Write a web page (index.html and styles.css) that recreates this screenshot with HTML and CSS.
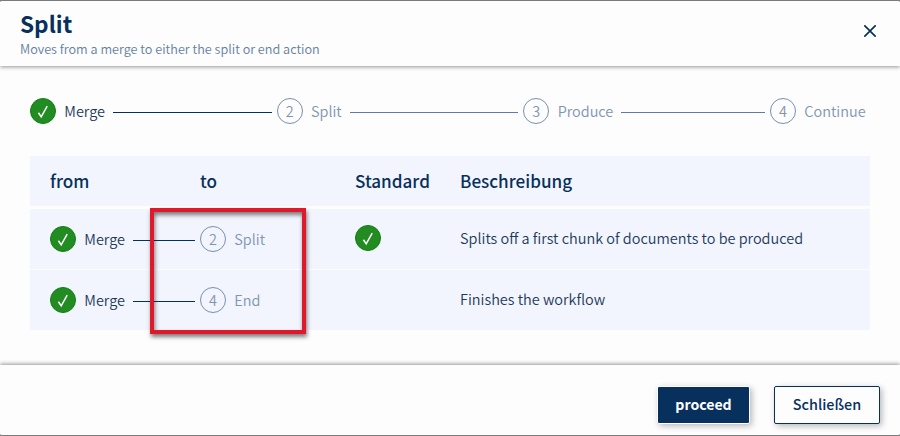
FILE: index.html
```html
<!DOCTYPE html>
<html lang="de">
<head>
<meta charset="utf-8">
<title>Split</title>
<link rel="stylesheet" href="styles.css">
</head>
<body>
<main class="dialog">
  <header class="head">
    <div>
      <h1 class="title">Split</h1>
      <p class="subtitle">Moves from a merge to either the split or end action</p>
    </div>
    <svg class="close" viewBox="0 0 12 12"><path d="M.3.3l11.4 11.4M11.7.3L.3 11.7"/></svg>
  </header>
  <section class="body">
    <div class="stepper">
      <div class="step done"><span class="dot"><svg viewBox="0 0 26 26"><path d="M8.4 14.8l2.8 4 6-10.6"/></svg></span><span class="label">Merge</span><i class="line"></i></div>
      <div class="step"><span class="dot">2</span><span class="label">Split</span><i class="line"></i></div>
      <div class="step"><span class="dot">3</span><span class="label">Produce</span><i class="line"></i></div>
      <div class="step last"><span class="dot">4</span><span class="label">Continue</span></div>
    </div>
    <div class="table">
      <div class="row heading"><span>from</span><span>to</span><span>Standard</span><span>Beschreibung</span></div>
      <div class="row">
        <div class="step done"><span class="dot"><svg viewBox="0 0 26 26"><path d="M8.4 14.8l2.8 4 6-10.6"/></svg></span><span class="label">Merge</span><i class="line"></i></div>
        <div class="step"><span class="dot">2</span><span class="label">Split</span></div>
        <div class="step done standard"><span class="dot"><svg viewBox="0 0 26 26"><path d="M8.4 14.8l2.8 4 6-10.6"/></svg></span></div>
        <span class="desc">Splits off a first chunk of documents to be produced</span>
      </div>
      <div class="row">
        <div class="step done"><span class="dot"><svg viewBox="0 0 26 26"><path d="M8.4 14.8l2.8 4 6-10.6"/></svg></span><span class="label">Merge</span><i class="line"></i></div>
        <div class="step"><span class="dot">4</span><span class="label">End</span></div>
        <span></span>
        <span class="desc">Finishes the workflow</span>
      </div>
      <div class="marker"></div>
    </div>
  </section>
  <footer class="foot">
    <button class="btn primary">proceed</button>
    <button class="btn">Schließen</button>
  </footer>
</main>
</body>
</html>
```
FILE: styles.css
```css
* { box-sizing: border-box; }
body {
  margin: 0;
  background: #777;
  color: #1d3a5c;
  font: 350 14.48px/20px "Noto Sans CJK SC", "Noto Sans", sans-serif;
}
.dialog {
  display: flex;
  flex-direction: column;
  height: 436px;
  border: solid #7b7b7b;
  border-width: 1px 0;
  border-radius: 2px;
  background: #fdfdfd;
  overflow: hidden;
}
.head {
  display: flex;
  justify-content: space-between;
  height: 65px;
  padding: 9px 24px 0 20px;
  box-shadow: 0 1px 4px rgba(0, 0, 0, .42);
}
.title {
  margin: 0;
  color: #08305d;
  font-size: 22.6px;
  font-weight: 700;
  line-height: 28px;
}
.subtitle {
  margin: 1px 0 0;
  color: #647f9f;
  font-size: 12.67px;
  line-height: 20px;
}
.close {
  width: 12px;
  height: 12px;
  margin-top: 15px;
  fill: none;
  stroke: #08305d;
  stroke-width: 1.7;
}
.body {
  flex: 1;
  padding: 32px 30px 0;
}
.stepper { display: flex; }
.step {
  display: flex;
  flex: 1;
  align-items: center;
  height: 26px;
  color: #7f95b0;
}
.step.last { flex: 0 0 100px; }
.dot {
  display: flex;
  flex: none;
  align-items: center;
  justify-content: center;
  width: 26px;
  height: 26px;
  border: 1px solid #7890ae;
  border-radius: 50%;
}
.done .dot {
  border-color: #108010;
  background: #228b22;
}
.dot svg {
  flex: none;
  width: 26px;
  height: 26px;
  fill: none;
  stroke: #fff;
  stroke-width: 1.5;
}
.label {
  margin-left: 8.3px;
  white-space: nowrap;
}
.done .label { color: #1d3a5c; }
.line {
  flex: 1;
  height: 1px;
  margin: 2px 5px 0 8px;
  background: #5d7da4;
}
.done .line { background: #08305d; }
.table {
  position: relative;
  margin-top: 32px;
}
.row {
  display: grid;
  grid-template-columns: 150px 155px 105px 1fr;
  align-items: center;
  height: 60px;
  margin-bottom: 1px;
  padding-left: 20px;
  background: #f2f5fd;
}
.heading {
  height: 50px;
  margin-bottom: 3px;
  color: #08305d;
  font-size: 17.1px;
  font-weight: 500;
}
.standard { margin-top: -2px; }
.desc { padding-bottom: 2px; }
.marker {
  position: absolute;
  left: 120px;
  top: 52px;
  width: 156px;
  height: 126px;
  border: 4px solid #df182c;
  box-shadow: 1px 3px 4px rgba(0, 0, 0, .5), inset 1px 3px 4px rgba(0, 0, 0, .5);
}
.foot {
  display: flex;
  justify-content: flex-end;
  align-items: flex-start;
  gap: 24px;
  height: 70px;
  padding: 21px 20px 0 0;
  box-shadow: 0 -1px 4px rgba(0, 0, 0, .42);
}
.btn {
  width: 106px;
  height: 38px;
  padding: 0 0 2px;
  border: 1px solid #08305d;
  border-radius: 2px;
  background: #fdfdfd;
  box-shadow: 2px 2px 6px rgba(0, 0, 0, .28);
  color: #08305d;
  font: 500 14.4px/20px "Noto Sans CJK SC", "Noto Sans", sans-serif;
}
.primary {
  width: 93px;
  border-color: #fff;
  background: #08305d;
  color: #fff;
  font-size: 14.1px;
  font-weight: 700;
}
```
